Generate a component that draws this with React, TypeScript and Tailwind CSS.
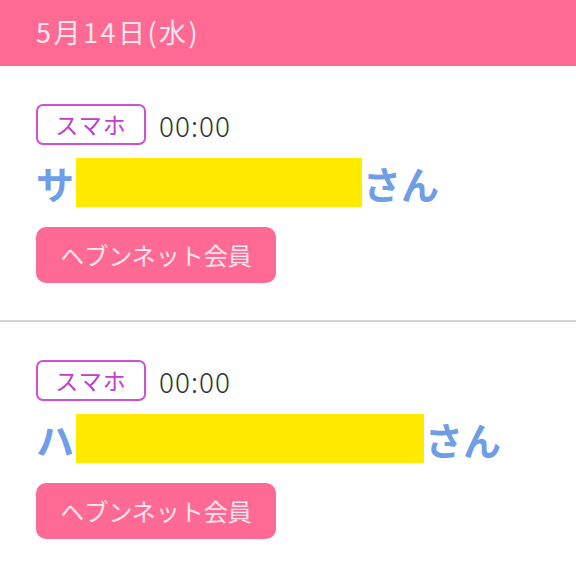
import React from "react";

const font = { fontFamily: '"Noto Sans CJK JP", "Noto Sans", sans-serif' };

function Entry({ initial, redactW, last }: { initial: string; redactW: number; last?: boolean }) {
  return (
    <div className={`px-[36px] pt-[38px] pb-[37px] ${last ? "" : "border-b-2 border-[#d4d4d4]"}`}>
      <div className="flex items-center gap-[13px] h-[41px]">
        <div className="h-[41px] w-[110px] border-2 border-[#d04fd6] rounded-[7px] flex items-center justify-center text-[23px] tracking-[1px] text-[#c23fc9] leading-none">
          スマホ
        </div>
        <div className="text-[28px] tracking-[1px] text-[#333] leading-none font-light">00:00</div>
      </div>
      <div className="mt-[13px] flex items-center h-[49px] text-[38px] font-bold text-[#6f9de6] leading-none">
        <span className="w-[40px]">{initial}</span>
        <span className="h-[49px] bg-[#ffea00]" style={{ width: redactW }} />
        <span className="ml-[1px]">さん</span>
      </div>
      <div className="mt-[20px] w-[240px] h-[56px] rounded-[10px] bg-[#fe6a93] flex items-center justify-center text-[24px] text-[#fde6ee] leading-none">
        ヘブンネット会員
      </div>
    </div>
  );
}

export default function App() {
  return (
    <div className="w-[576px] h-[570px] bg-white overflow-hidden" style={font}>
      <div className="h-[66px] bg-[#fe6a93] flex items-center px-[36px] pb-[2px] text-[27px] tracking-[2.5px] text-[#fde6ee]">
        5月14日(水)
      </div>
      <Entry initial="サ" redactW={286} />
      <Entry initial="ハ" redactW={348} last />
    </div>
  );
}
